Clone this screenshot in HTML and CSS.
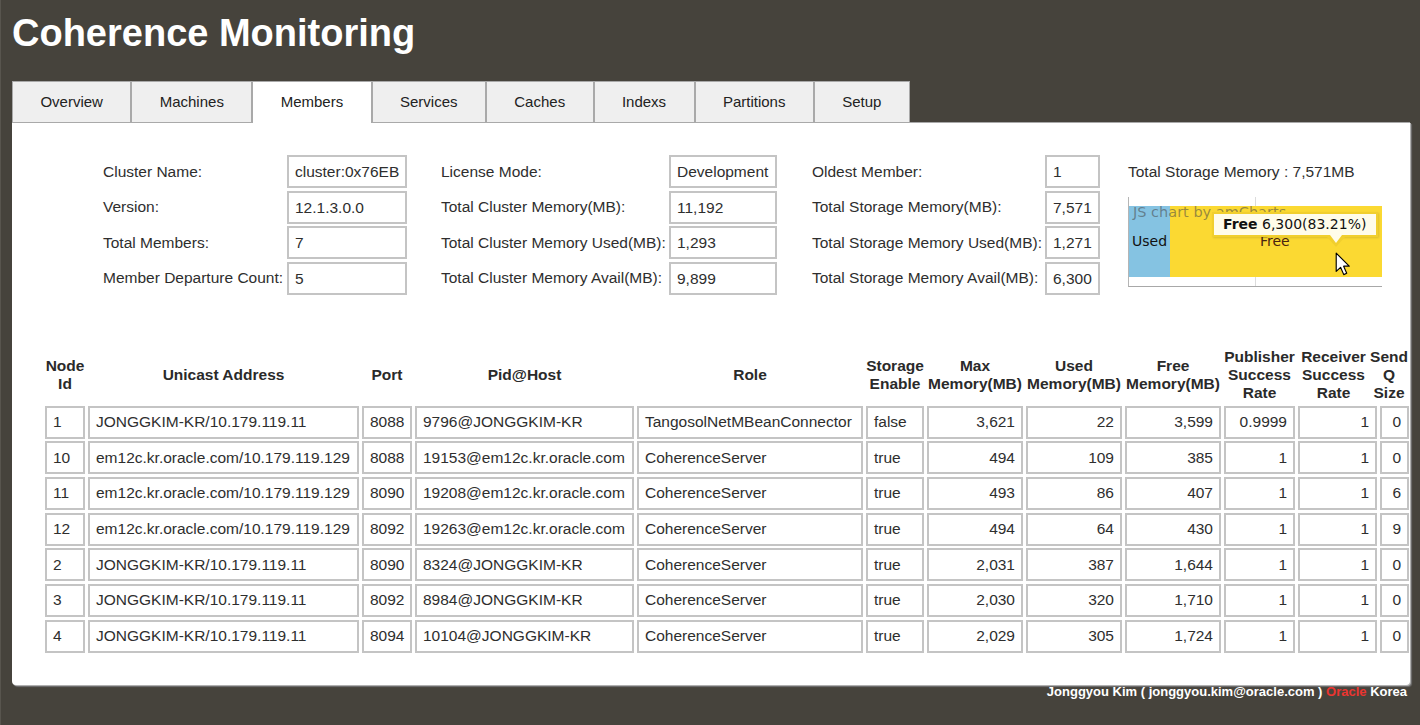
FILE: index.html
```html
<!DOCTYPE html>
<html lang="en">
<head>
<meta charset="utf-8">
<title>Coherence Monitoring</title>
<link rel="stylesheet" href="styles.css">
</head>
<body>
<h1 class="title">Coherence Monitoring</h1>
<nav class="tabs">
  <span class="tab">Overview</span>
  <span class="tab">Machines</span>
  <span class="tab active">Members</span>
  <span class="tab">Services</span>
  <span class="tab">Caches</span>
  <span class="tab">Indexs</span>
  <span class="tab">Partitions</span>
  <span class="tab">Setup</span>
</nav>
<main class="panel">
  <section class="info">
    <span class="lbl">Cluster Name:</span><span class="val c1">cluster:0x76EB</span>
    <span class="lbl">License Mode:</span><span class="val c2">Development</span>
    <span class="lbl">Oldest Member:</span><span class="val c3">1</span>
    <span class="lbl">Total Storage Memory : 7,571MB</span>

    <span class="lbl">Version:</span><span class="val c1">12.1.3.0.0</span>
    <span class="lbl">Total Cluster Memory(MB):</span><span class="val c2">11,192</span>
    <span class="lbl">Total Storage Memory(MB):</span><span class="val c3">7,571</span>

    <span class="lbl">Total Members:</span><span class="val c1">7</span>
    <span class="lbl">Total Cluster Memory Used(MB):</span><span class="val c2">1,293</span>
    <span class="lbl">Total Storage Memory Used(MB):</span><span class="val c3">1,271</span>

    <span class="lbl">Member Departure Count:</span><span class="val c1">5</span>
    <span class="lbl">Total Cluster Memory Avail(MB):</span><span class="val c2">9,899</span>
    <span class="lbl">Total Storage Memory Avail(MB):</span><span class="val c3">6,300</span>

    <div class="chart">
      <div class="plot">
        <div class="bar used">Used</div>
        <div class="bar free">Free</div>
      </div>
      <span class="credit-js">JS chart by amCharts</span>
      <div class="tooltip"><b>Free</b> 6,300(83.21%)</div>
      <svg class="cursor" width="15" height="24" viewBox="0 0 13 21">
        <path d="M1 1 L1 17 L4.8 13.4 L7.6 19.8 L10.2 18.6 L7.5 12.4 L12.4 12.4 Z" fill="#fff" stroke="#000" stroke-width="1" stroke-linejoin="round"/>
      </svg>
    </div>
  </section>

  <section class="members">
    <div class="th"><span>Node Id</span></div>
    <div class="th"><span>Unicast Address</span></div>
    <div class="th"><span>Port</span></div>
    <div class="th"><span>Pid@Host</span></div>
    <div class="th"><span>Role</span></div>
    <div class="th"><span>Storage Enable</span></div>
    <div class="th"><span>Max Memory(MB)</span></div>
    <div class="th"><span>Used Memory(MB)</span></div>
    <div class="th"><span>Free Memory(MB)</span></div>
    <div class="th"><span>Publisher Success Rate</span></div>
    <div class="th rcv"><span>Receiver Success Rate</span></div>
    <div class="th last"><span>Send Q Size</span></div>

    <div class="td">1</div><div class="td">JONGGKIM-KR/10.179.119.11</div><div class="td">8088</div><div class="td">9796@JONGGKIM-KR</div><div class="td">TangosolNetMBeanConnector</div><div class="td">false</div><div class="td num">3,621</div><div class="td num">22</div><div class="td num">3,599</div><div class="td num">0.9999</div><div class="td num">1</div><div class="td num">0</div>

    <div class="td">10</div><div class="td">em12c.kr.oracle.com/10.179.119.129</div><div class="td">8088</div><div class="td">19153@em12c.kr.oracle.com</div><div class="td">CoherenceServer</div><div class="td">true</div><div class="td num">494</div><div class="td num">109</div><div class="td num">385</div><div class="td num">1</div><div class="td num">1</div><div class="td num">0</div>

    <div class="td">11</div><div class="td">em12c.kr.oracle.com/10.179.119.129</div><div class="td">8090</div><div class="td">19208@em12c.kr.oracle.com</div><div class="td">CoherenceServer</div><div class="td">true</div><div class="td num">493</div><div class="td num">86</div><div class="td num">407</div><div class="td num">1</div><div class="td num">1</div><div class="td num">6</div>

    <div class="td">12</div><div class="td">em12c.kr.oracle.com/10.179.119.129</div><div class="td">8092</div><div class="td">19263@em12c.kr.oracle.com</div><div class="td">CoherenceServer</div><div class="td">true</div><div class="td num">494</div><div class="td num">64</div><div class="td num">430</div><div class="td num">1</div><div class="td num">1</div><div class="td num">9</div>

    <div class="td">2</div><div class="td">JONGGKIM-KR/10.179.119.11</div><div class="td">8090</div><div class="td">8324@JONGGKIM-KR</div><div class="td">CoherenceServer</div><div class="td">true</div><div class="td num">2,031</div><div class="td num">387</div><div class="td num">1,644</div><div class="td num">1</div><div class="td num">1</div><div class="td num">0</div>

    <div class="td">3</div><div class="td">JONGGKIM-KR/10.179.119.11</div><div class="td">8092</div><div class="td">8984@JONGGKIM-KR</div><div class="td">CoherenceServer</div><div class="td">true</div><div class="td num">2,030</div><div class="td num">320</div><div class="td num">1,710</div><div class="td num">1</div><div class="td num">1</div><div class="td num">0</div>

    <div class="td">4</div><div class="td">JONGGKIM-KR/10.179.119.11</div><div class="td">8094</div><div class="td">10104@JONGGKIM-KR</div><div class="td">CoherenceServer</div><div class="td">true</div><div class="td num">2,029</div><div class="td num">305</div><div class="td num">1,724</div><div class="td num">1</div><div class="td num">1</div><div class="td num">0</div>
  </section>
</main>
<footer class="footer">Jonggyou Kim ( jonggyou.kim@oracle.com ) <span class="oracle">Oracle</span> Korea</footer>
</body>
</html>
```

FILE: styles.css
```css
html {
  background: #46433c;
}
body {
  margin: 0;
  padding: 0 10px 0 11px;
  border-left: 1px solid #58554e;
  min-height: 725px;
  box-sizing: border-box;
  font-family: "Liberation Sans", Arial, sans-serif;
  color: #2e2e2e;
}
.title {
  margin: 0;
  padding-top: 11px;
  font-size: 38px;
  line-height: 44px;
  font-weight: bold;
  color: #ffffff;
}
.tabs {
  display: flex;
  margin-top: 26px;
}
.tab {
  height: 40px;
  padding: 0 27.4px;
  border: 1px solid #a9a9a9;
  border-bottom: 0;
  background: #efefef;
  font-size: 15px;
  line-height: 40px;
  color: #222;
}
.tab.active {
  background: #ffffff;
  height: 41px;
  margin-bottom: -1px;
  position: relative;
  z-index: 1;
}
.panel {
  display: block;
  background: #ffffff;
  border-top: 1px solid #a9a9a9;
  border-radius: 0 0 4px 4px;
  box-shadow: 1px 1px 0 #b0b0b0, 2px 2px 1px #707070;
  padding: 32px 0 32px 33px;
}

/* summary grid */
.info {
  display: grid;
  margin-left: 58px;
  grid-template-columns: 184px 154px 228px 143px 233px 83px 254px;
  grid-auto-rows: 33px;
  row-gap: 2.67px;
  align-items: center;
  font-size: 15.5px;
}
.lbl {
  white-space: nowrap;
}
.val {
  box-sizing: border-box;
  height: 33px;
  border: 2px solid #c4c4c4;
  padding: 0 6px;
  line-height: 29px;
  white-space: nowrap;
  overflow: hidden;
}
.c1 { width: 120px; }
.c2 { width: 108px; }
.c3 { width: 55px; }

/* chart */
.chart {
  grid-column: 7;
  grid-row: 2 / span 3;
  align-self: start;
  margin-top: 6px;
  height: 90px;
  box-sizing: border-box;
  padding: 9px 0 9px 0;
  border-left: 1px solid #b5b5b5;
  border-bottom: 1px solid #a8a8a8;
  background: linear-gradient(#dcdcdc, #dcdcdc) 126px 0 / 1px 100% no-repeat;
  position: relative;
  font-family: "DejaVu Sans", Verdana, sans-serif;
  font-size: 14px;
}
.plot {
  display: flex;
  height: 71px;
}
.bar {
  display: flex;
  align-items: center;
  color: #111;
}
.used {
  width: 41px;
  background: #85c3e2;
  padding-left: 3px;
  box-sizing: border-box;
}
.free {
  flex: 1;
  background: #fbd932;
  padding-left: 90px;
  color: #4a2410;
}
.credit-js {
  position: absolute;
  left: 4px;
  top: 6px;
  font-size: 14.5px;
  line-height: 18px;
  color: rgba(70, 70, 70, 0.55);
  white-space: nowrap;
}
.tooltip {
  position: absolute;
  left: 83px;
  top: 15px;
  width: 166px;
  height: 25px;
  box-sizing: border-box;
  border: 2px solid #f1cf2e;
  background: #fffcea;
  padding-left: 9px;
  line-height: 21px;
  font-size: 14px;
  color: #111;
  white-space: nowrap;
  box-shadow: 1px 1px 2px rgba(0, 0, 0, 0.12);
}
.tooltip::before {
  content: "";
  position: absolute;
  left: 113px;
  top: 23px;
  border-left: 9px solid transparent;
  border-right: 9px solid transparent;
  border-top: 10px solid #f1cf2e;
}
.tooltip::after {
  content: "";
  position: absolute;
  left: 116px;
  top: 21px;
  border-left: 6px solid transparent;
  border-right: 6px solid transparent;
  border-top: 8px solid #fffcea;
}
.cursor {
  position: absolute;
  left: 206px;
  top: 55px;
}

/* members table */
.members {
  display: grid;
  margin-top: 53px;
  grid-template-columns: 40px 271px 50px 219px 226px 58px 96px 96px 96px 71px 79px 29px;
  grid-template-rows: 55px;
  grid-auto-rows: 33px;
  column-gap: 3px;
  row-gap: 2.67px;
  font-size: 15.5px;
}
.th {
  display: flex;
  justify-content: center;
  align-items: center;
  font-weight: bold;
  line-height: 18px;
  text-align: center;
  color: #2a2a2a;
}
.th.rcv {
  padding-right: 8px;
}
.th.last {
  justify-content: flex-end;
  padding-right: 1px;
}
.td {
  display: flex;
  align-items: center;
  box-sizing: border-box;
  border: 2px solid #c4c4c4;
  padding: 0 6px;
  white-space: nowrap;
}
.td.num {
  justify-content: flex-end;
}

/* footer */
.footer {
  text-align: right;
  padding-right: 3px;
  font-size: 13px;
  line-height: 14px;
  font-weight: bold;
  color: #ffffff;
}
.oracle {
  color: #ec3530;
}
```
